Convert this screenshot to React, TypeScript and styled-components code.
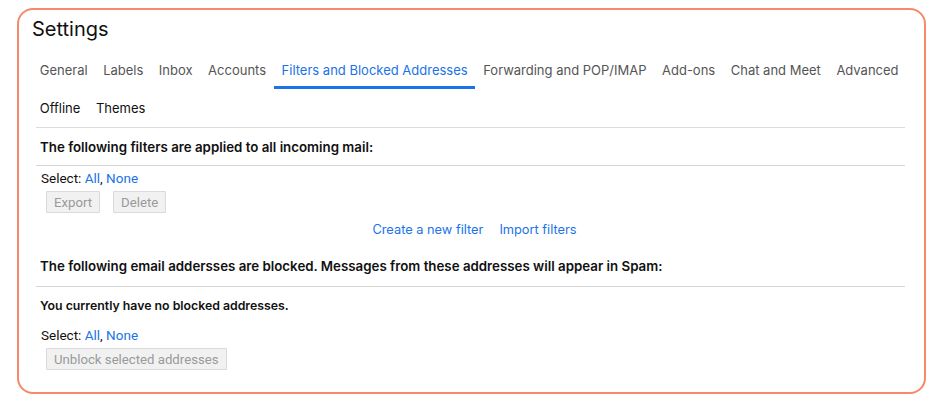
import React from "react";
import styled, { createGlobalStyle } from "styled-components";

const Global = createGlobalStyle`
  html, body { margin: 0; padding: 0; background: #ffffff; }
  body { font-family: Inter, "Noto Sans", sans-serif; color: #111; }
`;

const Card = styled.div`
  box-sizing: border-box;
  margin: 8px 7px 0 17px;
  height: 386px;
  border: 2px solid #f7886a;
  border-radius: 16px;
  padding: 6px 19px 0 13px;
  display: flex;
  flex-direction: column;
`;

const Title = styled.h1`
  margin: 0;
  font-family: Inter, sans-serif;
  font-weight: 400;
  font-size: 20px;
  line-height: 26px;
  color: #111;
`;

const Tabs = styled.nav`
  display: flex;
  flex-wrap: wrap;
  margin: 9px -8px 0 0;
`;

const Tab = styled.a<{ $active?: boolean; $dark?: boolean }>`
  box-sizing: border-box;
  height: 38px;
  padding: 3px 7.75px 0;
  display: flex;
  align-items: center;
  font-size: 13px;
  cursor: pointer;
  white-space: nowrap;
  color: ${(p) => (p.$active ? "#1a73e8" : p.$dark ? "#111" : "#555")};
  border-bottom: 3px solid ${(p) => (p.$active ? "#1a73e8" : "transparent")};
`;

const Content = styled.div`
  margin-left: 4px;
  display: flex;
  flex-direction: column;
  border-top: 1px solid #dcdcdc;
`;

const Heading = styled.div<{ $h: number }>`
  box-sizing: border-box;
  height: ${(p) => p.$h}px;
  display: flex;
  align-items: center;
  padding-left: 4px;
  font-size: 13.3px;
  font-weight: 600;
  color: #111;
  border-bottom: 1px solid #d6d6d6;
`;

const Note = styled.div`
  padding: 11px 0 0 4px;
  font-size: 12.3px;
  font-weight: 600;
  line-height: 16px;
  color: #111;
`;

const SelectLine = styled.div<{ $top: number }>`
  padding: ${(p) => p.$top}px 0 0 5px;
  font-family: Roboto, Arial, sans-serif;
  font-size: 13.5px;
  line-height: 16px;
  color: #111;
`;

const Link = styled.a`
  color: #1a73e8;
  cursor: pointer;
`;

const Buttons = styled.div`
  display: flex;
  gap: 13px;
  padding: 5px 0 0 10px;
`;

const Btn = styled.button`
  box-sizing: border-box;
  height: 22px;
  padding: 0 7px;
  background: #f1f1f1;
  border: 1px solid #dadada;
  border-radius: 1px;
  color: #9a9a9a;
  font-family: Roboto, Arial, sans-serif;
  font-size: 13.2px;
`;

const Actions = styled.div`
  display: flex;
  justify-content: center;
  gap: 16px;
  padding: 9px 0 7px 8px;
  font-size: 12.8px;
  line-height: 16px;
`;

export default function App() {
  const tabs = [
    "General",
    "Labels",
    "Inbox",
    "Accounts",
    "Filters and Blocked Addresses",
    "Forwarding and POP/IMAP",
    "Add-ons",
    "Chat and Meet",
    "Advanced",
  ];
  return (
    <>
      <Global />
      <Card>
        <Title>Settings</Title>
        <Tabs>
          {tabs.map((t) => (
            <Tab key={t} $active={t === "Filters and Blocked Addresses"}>
              {t}
            </Tab>
          ))}
          <Tab $dark>Offline</Tab>
          <Tab $dark>Themes</Tab>
        </Tabs>
        <Content>
          <Heading $h={38}>The following filters are applied to all incoming mail:</Heading>
          <SelectLine $top={4}>
            Select: <Link>All</Link>, <Link>None</Link>
          </SelectLine>
          <Buttons>
            <Btn disabled>Export</Btn>
            <Btn disabled>Delete</Btn>
          </Buttons>
          <Actions>
            <Link>Create a new filter</Link>
            <Link>Import filters</Link>
          </Actions>
          <Heading $h={42}>
            The following email addersses are blocked. Messages from these addresses will appear in Spam:
          </Heading>
          <Note>You currently have no blocked addresses.</Note>
          <SelectLine $top={13}>
            Select: <Link>All</Link>, <Link>None</Link>
          </SelectLine>
          <Buttons>
            <Btn disabled>Unblock selected addresses</Btn>
          </Buttons>
        </Content>
      </Card>
    </>
  );
}
